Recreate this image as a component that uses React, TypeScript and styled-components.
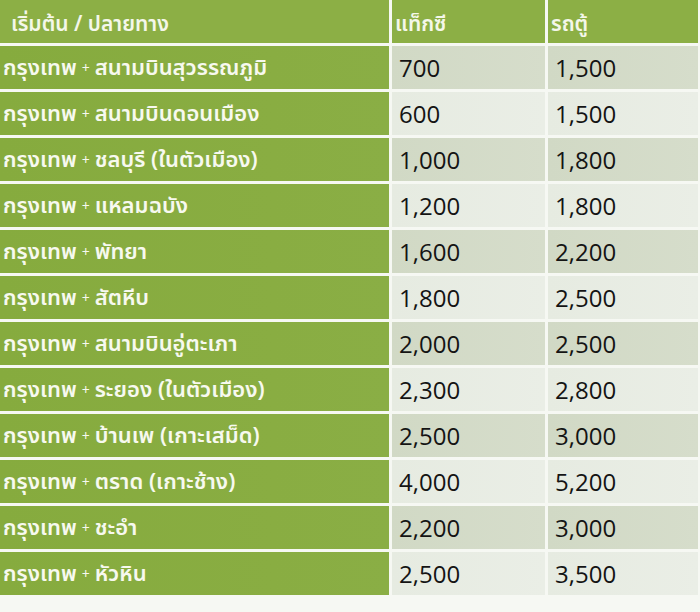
import React, { FC } from 'react';
import styled, { createGlobalStyle } from 'styled-components';

const GlobalStyle = createGlobalStyle`
  html, body {
    margin: 0;
    padding: 0;
    background: #f6f8f3;
  }
`;

const Table = styled.div`
  display: grid;
  grid-template-columns: 389px 153px 150px;
  grid-auto-rows: 43px;
  gap: 3px;
  width: 698px;
  padding-bottom: 15px;
  font-family: 'Open Sans', 'Noto Sans', 'Noto Sans Thai', Tahoma, sans-serif;
`;

const HeadCell = styled.div<{ $first?: boolean }>`
  display: flex;
  align-items: center;
  padding-top: 6px;
  padding-left: ${p => (p.$first ? '11px' : '3px')};
  background: #8caf45;
  color: #f4f7ea;
  font-size: 21px;
  font-weight: 600;
  font-family: 'Noto Sans', 'Noto Sans Thai', Tahoma, sans-serif;
`;

const RouteCell = styled.div`
  display: flex;
  align-items: center;
  padding-left: 3px;
  background: linear-gradient(90deg, #86ab3e 0%, #89ad42 70%, #8aae45 100%);
  color: #f7f9ef;
  font-size: 22px;
  font-weight: 600;
  font-family: 'Noto Sans', 'Noto Sans Thai', Tahoma, sans-serif;
  white-space: nowrap;
`;

const Plus = styled.span`
  font-size: 14px;
  font-weight: 400;
  margin: 0 5px;
`;

const PriceCell = styled.div<{ $dark: boolean }>`
  display: flex;
  align-items: center;
  padding-left: 7px;
  background: ${p =>
    p.$dark
      ? 'linear-gradient(90deg, #d1d9c5 0%, #d6ddcb 100%)'
      : 'linear-gradient(90deg, #e6ebe1 0%, #eaeee6 100%)'};
  color: #141414;
  font-size: 24px;
  font-family: 'Open Sans', 'Noto Sans', sans-serif;
`;

type Route = { to: string; taxi: string; van: string };

const routes: Route[] = [
  { to: 'สนามบินสุวรรณภูมิ', taxi: '700', van: '1,500' },
  { to: 'สนามบินดอนเมือง', taxi: '600', van: '1,500' },
  { to: 'ชลบุรี (ในตัวเมือง)', taxi: '1,000', van: '1,800' },
  { to: 'แหลมฉบัง', taxi: '1,200', van: '1,800' },
  { to: 'พัทยา', taxi: '1,600', van: '2,200' },
  { to: 'สัตหีบ', taxi: '1,800', van: '2,500' },
  { to: 'สนามบินอู่ตะเภา', taxi: '2,000', van: '2,500' },
  { to: 'ระยอง (ในตัวเมือง)', taxi: '2,300', van: '2,800' },
  { to: 'บ้านเพ (เกาะเสม็ด)', taxi: '2,500', van: '3,000' },
  { to: 'ตราด (เกาะช้าง)', taxi: '4,000', van: '5,200' },
  { to: 'ชะอำ', taxi: '2,200', van: '3,000' },
  { to: 'หัวหิน', taxi: '2,500', van: '3,500' },
];

const App: FC = () => (
  <>
    <GlobalStyle />
    <Table>
      <HeadCell $first>เริ่มต้น / ปลายทาง</HeadCell>
      <HeadCell>แท็กซี</HeadCell>
      <HeadCell>รถตู้</HeadCell>
      {routes.map((r, i) => (
        <React.Fragment key={r.to}>
          <RouteCell>
            กรุงเทพ<Plus>+</Plus>
            {r.to}
          </RouteCell>
          <PriceCell $dark={i % 2 === 0}>{r.taxi}</PriceCell>
          <PriceCell $dark={i % 2 === 0}>{r.van}</PriceCell>
        </React.Fragment>
      ))}
    </Table>
  </>
);

export default App;
